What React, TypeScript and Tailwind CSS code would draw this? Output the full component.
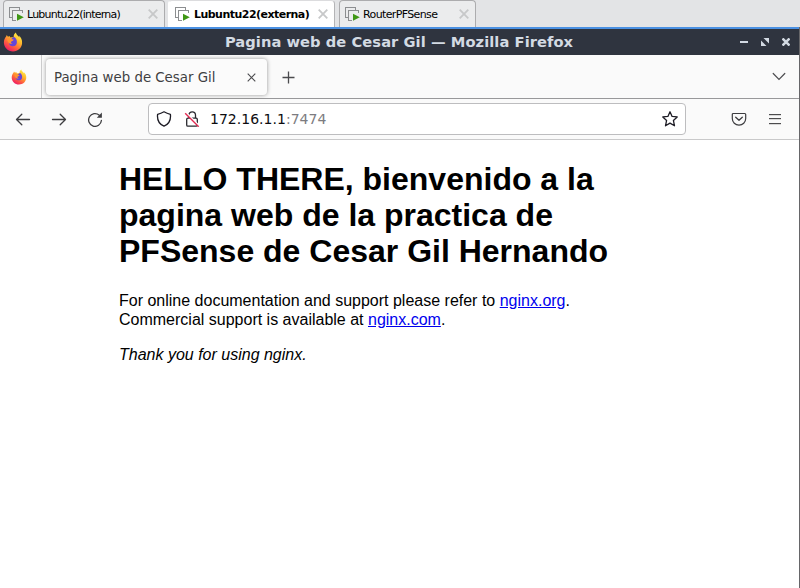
import React from "react";

type TabProps = { label: string; active?: boolean; className: string; textClass: string };

function MachineIcon() {
  return (
    <svg width="15" height="14" viewBox="0 0 15 14" fill="none" className="shrink-0" shapeRendering="crispEdges">
      <path d="M3.500 10.500H.5V.5H10.500V3" stroke="#8c8e90" />
      <path d="M7 13.500H3.500V3.500H13.500V6" stroke="#8c8e90" />
      <path d="M8 6.800V13.800L14.800 10.300Z" fill="#3f9714" shapeRendering="auto" />
    </svg>
  );
}

function MachineTab({ label, active, className, textClass }: TabProps) {
  return (
    <div
      className={`flex h-[27px] items-center rounded-t-[4px] border border-b-0 pl-[5px] pr-[6px] ${
        active ? "border-l-white border-r-[#b4b4b6] border-t-[#dcdcde] bg-white" : "border-[#acacae] bg-[#ebeced]"
      } ${className}`}
    >
      <MachineIcon />
      <span className={`ml-[3px] whitespace-nowrap pt-px text-[11px] leading-[14px] text-black ${textClass}`}>{label}</span>
      <svg width="10" height="10" viewBox="0 0 10 10" className="ml-auto shrink-0" stroke="#c7c8c9" strokeWidth="1.800">
        <path d="M.7.7 9.300 9.300M9.300.7.7 9.300" />
      </svg>
    </div>
  );
}

function Firefox({ size, id }: { size: number; id: string }) {
  return (
    <svg width={size} height={size} viewBox="0 0 20 20" className="shrink-0">
      <defs>
        <linearGradient id={id} x1="16" y1="2" x2="5" y2="19" gradientUnits="userSpaceOnUse">
          <stop offset="0" stopColor="#fff04a" />
          <stop offset=".35" stopColor="#ffb52b" />
          <stop offset=".65" stopColor="#ff633d" />
          <stop offset="1" stopColor="#ed1468" />
        </linearGradient>
      </defs>
      <path
        d="M12.900.6c.2 2.100 2.500 3.300 3.500 5 0-.8-.2-1.500-.5-2C18 5.200 19.300 8 19.100 11.300 18.700 16 15 19.400 10 19.400 4.900 19.400.9 15.500.9 10.500.9 7.900 1.900 5.800 3.300 4.300L3.700 3 5 4.800 6.500 3.900 7.400 5.500C8.700 5 9.600 5.100 10.700 5.500 10.400 3.600 11.300 1.600 12.900.6Z"
        fill={`url(#${id})`}
      />
      <path d="M8 7.400c.9-1.200 2.100-2 3.300-2.300 1.700 1.100 2.700 2.900 2.600 5.100 0 2.500-1.700 4-4 4-2.400 0-4.100-1.600-4-3.700Z" fill="#6546d8" />
      <path d="M3.900 6.600c1.400-.8 2.900-.5 4.100.4l2.700.6c-.1.700-.6 1.200-1.400 1.500l-1.200.6c-.7.900.3 1.700 1.600 1.400-.7.900-2.300 1.100-3.500.1-.9-.7-1.900-2.300-2.300-4.600Z" fill="#ff9330" />
    </svg>
  );
}

function Toolbar() {
  return (
    <div className="flex h-[41px] shrink-0 items-center border-b border-[#c9c9ca] bg-[#fafafa]">
      <div className="ml-[15px] flex items-center gap-5 text-[#3d3d40]">
        <svg width="16" height="16" viewBox="0 0 16 16" fill="none" stroke="currentColor" strokeWidth="1.300" strokeLinecap="round" strokeLinejoin="round">
          <path d="M14.500 8.500h-13M6.800 3.200 1.500 8.500l5.300 5.300" />
        </svg>
        <svg width="16" height="16" viewBox="0 0 16 16" fill="none" stroke="currentColor" strokeWidth="1.300" strokeLinecap="round" strokeLinejoin="round">
          <path d="M1.500 8.500h13M9.200 3.200l5.300 5.300-5.300 5.300" />
        </svg>
        <svg width="16" height="16" viewBox="0 0 16 16" fill="none" stroke="currentColor" strokeWidth="1.300" strokeLinecap="round">
          <path d="M12.300 4.200A6.400 6.400 0 1 0 14.400 9.500" />
          <path d="M14.900 1.600v5.100H9.800Z" fill="currentColor" stroke="none" />
        </svg>
      </div>
      <div className="ml-[45px] flex h-[32px] w-[538px] items-center rounded-[4px] border border-[#bdbdbf] bg-white pl-[7px] pr-[7px]">
        <svg width="16" height="16" viewBox="0 0 16 16" fill="none" stroke="#1d1c25" strokeWidth="1.300" strokeLinejoin="round">
          <path d="M8 .8Q11 2.600 14.400 3.400C15 8.500 13.100 13 8 15.200 2.900 13 1 8.500 1.600 3.400Q5 2.600 8 .8Z" />
        </svg>
        <svg width="16" height="16" viewBox="0 0 16 16" fill="none" className="ml-3" stroke="#29282f" strokeWidth="1.300">
          <rect x="2.700" y="7.200" width="10.600" height="8" rx="1.200" />
          <path d="M4.900 7V4.100a3.300 3.300 0 0 1 6.600 0V7" />
          <path d="M2.200 1.900 15.200 14.900" stroke="white" strokeWidth="1.800" />
          <path d="M1.200 2.200 14.700 15.700" stroke="#e22850" strokeWidth="1.400" />
        </svg>
        <span className="ml-[10px] font-['DejaVu_Sans'] text-[14px] leading-[18px] tracking-[0.020px] text-[#0c0c10]">
          172.16.1.1<span className="text-[#7c7c80]">:7474</span>
        </span>
        <svg width="16" height="16" viewBox="0 0 16 16" fill="none" className="ml-auto" stroke="#1d1c25" strokeWidth="1.300" strokeLinejoin="round">
          <path d="m8 .8 2.100 4.600 5.100.5-3.800 3.500 1.100 5.400L8 12.100l-4.500 2.700 1.100-5.400L.8 5.900l5.100-.5Z" />
        </svg>
      </div>
      <div className="ml-[45px] flex items-center gap-5 text-[#3d3d40]">
        <svg width="16" height="16" viewBox="0 0 16 16" fill="none" stroke="currentColor" strokeWidth="1.200" strokeLinecap="round" strokeLinejoin="round">
          <path d="M2.200 2.500h11.600c.5 0 .9.400.9.900v4.100a6.700 6.700 0 0 1-13.400 0V3.400c0-.5.4-.9.9-.9Z" />
          <path d="M4.700 6.200 8 9.200l3.300-3" strokeWidth="1.300" />
        </svg>
        <svg width="16" height="16" viewBox="0 0 16 16" shapeRendering="crispEdges" stroke="#4c4c4e">
          <path d="M2 3.500h12M2 7.500h12M2 12.500h12" />
          <path d="M2 4.500h12M2 8.500h12M2 13.500h12" stroke="#d8d8d8" />
        </svg>
      </div>
    </div>
  );
}

export default function App() {
  return (
    <div className="flex h-[588px] w-[800px] flex-col overflow-hidden bg-white">
      <div className="flex h-[27px] shrink-0 bg-[#e3e4e6] pl-[3px] font-['DejaVu_Sans',sans-serif]">
        <MachineTab label="Lubuntu22(interna)" className="w-[162px]" textClass="tracking-[-0.770px]" />
        <MachineTab label="Lubuntu22(externa)" active className="ml-[3px] w-[167px] pl-[6px]" textClass="pl-px font-bold tracking-[-0.530px]" />
        <MachineTab label="RouterPFSense" className="ml-1 w-[137px]" textClass="tracking-[-0.620px]" />
      </div>

      <div className="flex min-h-0 flex-1 flex-col border-r border-[#666669] bg-white">
        <header className="flex h-[28px] shrink-0 items-center border-t-2 border-[#4a90e2] bg-[#2f343f]">
          <div className="ml-[3px] flex w-[80px]"><Firefox size={20} id="title-flame" /></div>
          <h2 className="flex-1 pl-[48px] text-center font-['DejaVu_Sans'] text-[14.670px] font-bold leading-[20px] tracking-[0.060px] text-[#d3dae3]">
            Pagina web de Cesar Gil — Mozilla Firefox
          </h2>
          <div className="flex w-[132px] items-center justify-end gap-[13px] pr-[9px]">
            <svg width="8" height="8" viewBox="0 0 8 8" shapeRendering="crispEdges"><path d="M0 3h8v2H0Z" fill="#d3dae3" /></svg>
            <svg width="8" height="8" viewBox="0 0 8 8" fill="#d3dae3"><path d="M2.500 0H8v5.500ZM0 2.500V8h5.500Z" /></svg>
            <svg width="8" height="8" viewBox="0 0 8 8" stroke="#d3dae3" strokeWidth="2.500"><path d="m.5.500 7 7m0-7-7 7" /></svg>
          </div>
        </header>

        <div className="flex h-[44px] shrink-0 items-center border-b border-[#98989a] bg-[#fafafa]">
          <div className="flex h-full w-[42px] items-center border-r border-[#cccccd] pl-[11px]">
            <Firefox size={16} id="tab-flame" />
          </div>
          <div className="ml-[4px] flex h-[36px] w-[221px] items-center rounded-[4px] bg-[#fbfbfb] pl-[8px] pr-[11px] shadow-[0_0_4px_rgba(0,0,0,0.4)]">
            <span className="whitespace-nowrap pt-[2px] font-['DejaVu_Sans'] text-[13.330px] leading-[18px] text-[#3f3f42]">Pagina web de Cesar Gil</span>
            <svg width="9" height="9" viewBox="0 0 9 9" className="ml-auto mt-px" stroke="#4b4b4e" strokeWidth="1.100"><path d="m.7.700 7.600 7.600m0-7.600L.7 8.300" /></svg>
          </div>
          <svg width="13" height="13" viewBox="0 0 13 13" className="mt-[2px] ml-[15px]" stroke="#4b4b4e" strokeWidth="1.300"><path d="M6.500.5v12M.5 6.500h12" /></svg>
          <svg width="14" height="9" viewBox="0 0 14 9" className="ml-auto mr-[13px]" fill="none" stroke="#4b4b4e" strokeWidth="1.200" strokeLinecap="round"><path d="M1.200 1.500 7 7.300l5.800-5.800" /></svg>
        </div>

        <Toolbar />

        <main className="ml-[119px] w-[560px] pt-[21px] font-['Liberation_Sans',Arial,sans-serif] text-[16px] leading-[19px] text-black">
          <h1 className="text-[32px] font-bold leading-[36px]">
            HELLO THERE, bienvenido a la<br />pagina web de la practica de<br />PFSense de Cesar Gil Hernando
          </h1>
          <p className="mt-[22px]">
            For online documentation and support please refer to <a className="text-[#0000ee] underline">nginx.org</a>.<br />
            Commercial support is available at <a className="text-[#0000ee] underline">nginx.com</a>.
          </p>
          <p className="mt-4"><em>Thank you for using nginx.</em></p>
        </main>
      </div>
    </div>
  );
}
